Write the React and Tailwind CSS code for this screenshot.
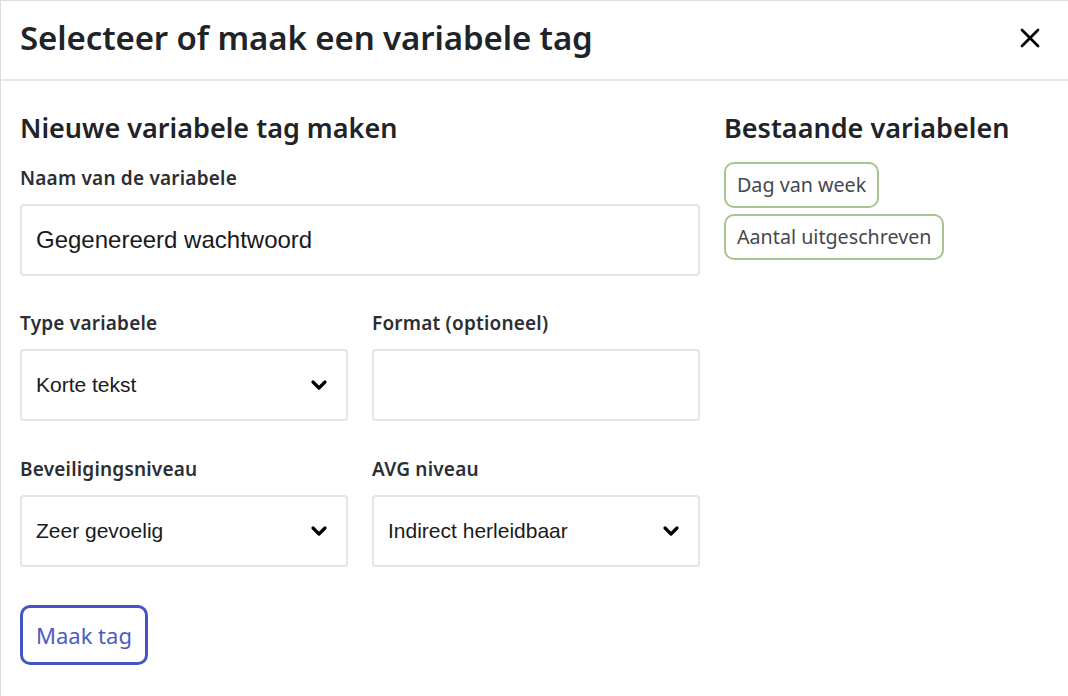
import { X, ChevronDown } from "lucide-react";

const labelCls = "block text-[19px] font-semibold text-[#2b2e33] mb-[15px] leading-[22px] tracking-[0.2px]";
const boxCls = "w-full h-[72px] border-2 border-[#e5e5e5] rounded-[4px] bg-white flex items-center px-[14px]";
const chipCls = "h-[46px] flex items-center px-[11px] border-2 border-[#a6c590] rounded-[10px] text-[19.7px] text-[#45484d]";
const arial = { fontFamily: '"Liberation Sans", Arial, sans-serif' };

function SelectBox({ value }) {
    return (
        <div className={boxCls + " justify-between"}>
            <span className="text-[21px] text-[#1a1a1a]" style={arial}>{value}</span>
            <ChevronDown size={24} strokeWidth={3.2} className="text-black mr-[1px]" />
        </div>
    );
}

export default function App() {
    return (
        <div className="w-[1068px] h-[696px] bg-white border-l border-t border-[#dcdcdc] overflow-hidden" style={{ fontFamily: '"Noto Sans", sans-serif' }}>
            {/* Header */}
            <div className="h-[80px] flex items-center justify-between pl-[19px] pr-[22px] pb-[4px] border-b-2 border-[#e6e6e6]">
                <h1 className="text-[33px] font-semibold text-[#202328] tracking-[-0.1px]">Selecteer of maak een variabele tag</h1>
                <X size={32} strokeWidth={2} className="text-black" />
            </div>

            <div className="flex pl-[19px] pt-[30px]">
                {/* Form */}
                <div className="w-[680px]">
                    <h2 className="text-[27px] font-semibold text-[#202328] leading-[34px] mb-[22px]">Nieuwe variabele tag maken</h2>
                    <label className={labelCls}>Naam van de variabele</label>
                    <div className={boxCls + " h-[71px]"}>
                        <span className="text-[24px] text-[#1a1a1a]" style={arial}>Gegenereerd wachtwoord</span>
                    </div>

                    <div className="grid grid-cols-2 gap-x-[24px] mt-[36px]">
                        <div>
                            <label className={labelCls}>Type variabele</label>
                            <SelectBox value="Korte tekst" />
                        </div>
                        <div>
                            <label className={labelCls}>Format (optioneel)</label>
                            <div className={boxCls}></div>
                        </div>
                    </div>

                    <div className="grid grid-cols-2 gap-x-[24px] mt-[37px]">
                        <div>
                            <label className={labelCls}>Beveiligingsniveau</label>
                            <SelectBox value="Zeer gevoelig" />
                        </div>
                        <div>
                            <label className={labelCls}>AVG niveau</label>
                            <SelectBox value="Indirect herleidbaar" />
                        </div>
                    </div>

                    <button className="mt-[38px] h-[60px] px-[13px] border-[3px] border-[#4454c4] rounded-[10px] text-[22px] text-[#4d5cc2]">Maak tag</button>
                </div>

                {/* Existing */}
                <div className="ml-[24px]">
                    <h2 className="text-[27px] font-semibold text-[#202328] leading-[34px] mb-[17px]">Bestaande variabelen</h2>
                    <div className="flex flex-col items-start gap-[6px]">
                        <span className={chipCls}>Dag van week</span>
                        <span className={chipCls}>Aantal uitgeschreven</span>
                    </div>
                </div>
            </div>
        </div>
    );
}
